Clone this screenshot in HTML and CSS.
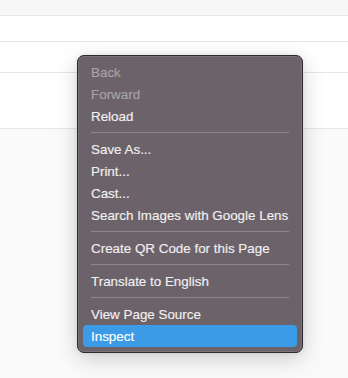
FILE: index.html
```html
<!DOCTYPE html>
<html>
<head>
<meta charset="utf-8">
<link rel="stylesheet" href="styles.css">
</head>
<body>
<div class="page">
  <div class="row row-top"></div>
  <div class="row row-a"></div>
  <div class="row row-b"></div>
  <div class="row row-c"></div>
  <div class="rest"></div>
</div>
<div class="menu">
  <div class="item disabled">Back</div>
  <div class="item disabled">Forward</div>
  <div class="item">Reload</div>
  <div class="sep"></div>
  <div class="item">Save As...</div>
  <div class="item">Print...</div>
  <div class="item">Cast...</div>
  <div class="item">Search Images with Google Lens</div>
  <div class="sep"></div>
  <div class="item">Create QR Code for this Page</div>
  <div class="sep"></div>
  <div class="item">Translate to English</div>
  <div class="sep"></div>
  <div class="item">View Page Source</div>
  <div class="item active">Inspect</div>
</div>
</body>
</html>
```
FILE: styles.css
```css
html, body {
  margin: 0;
  padding: 0;
  width: 348px;
  height: 378px;
  overflow: hidden;
  background: #fafafa;
}
.page {
  display: flex;
  flex-direction: column;
}
.row {
  border-bottom: 1px solid #e6e6e6;
  background: #ffffff;
}
.row-top { height: 15px; background: #f7f7f7; }
.row-a { height: 25px; }
.row-b { height: 30px; }
.row-c { height: 55px; }
.rest { height: 250px; background: #fafafa; }
.menu {
  position: absolute;
  left: 77px;
  top: 55px;
  width: 226px;
  box-sizing: border-box;
  padding: 5px 5px;
  background: #6b6369;
  border: 1px solid #2e2a2d;
  border-radius: 7px;
  box-shadow: inset 0 0 0 1px #7a7278, 0 6px 22px rgba(0,0,0,0.18), 0 0 4px rgba(0,0,0,0.08);
  font-family: "Liberation Sans", Arial, sans-serif;
  font-size: 13.4px;
  color: #f2eff1;
  -webkit-text-stroke: 0.15px #f2eff1;
}
.item {
  height: 22px;
  box-sizing: border-box;
  padding-top: 1px;
  line-height: 21px;
  padding-left: 8px;
  border-radius: 4px;
  white-space: nowrap;
}
.item.disabled { color: #a9a3a7; -webkit-text-stroke-color: #a9a3a7; }
.item.active { background: #3b9be6; color: #ffffff; -webkit-text-stroke-color: #ffffff; }
.sep {
  height: 11px;
  display: flex;
  align-items: center;
  padding: 0 8px;
}
.sep::before {
  content: "";
  flex: 1;
  height: 1px;
  background: #8c858a;
}
```
